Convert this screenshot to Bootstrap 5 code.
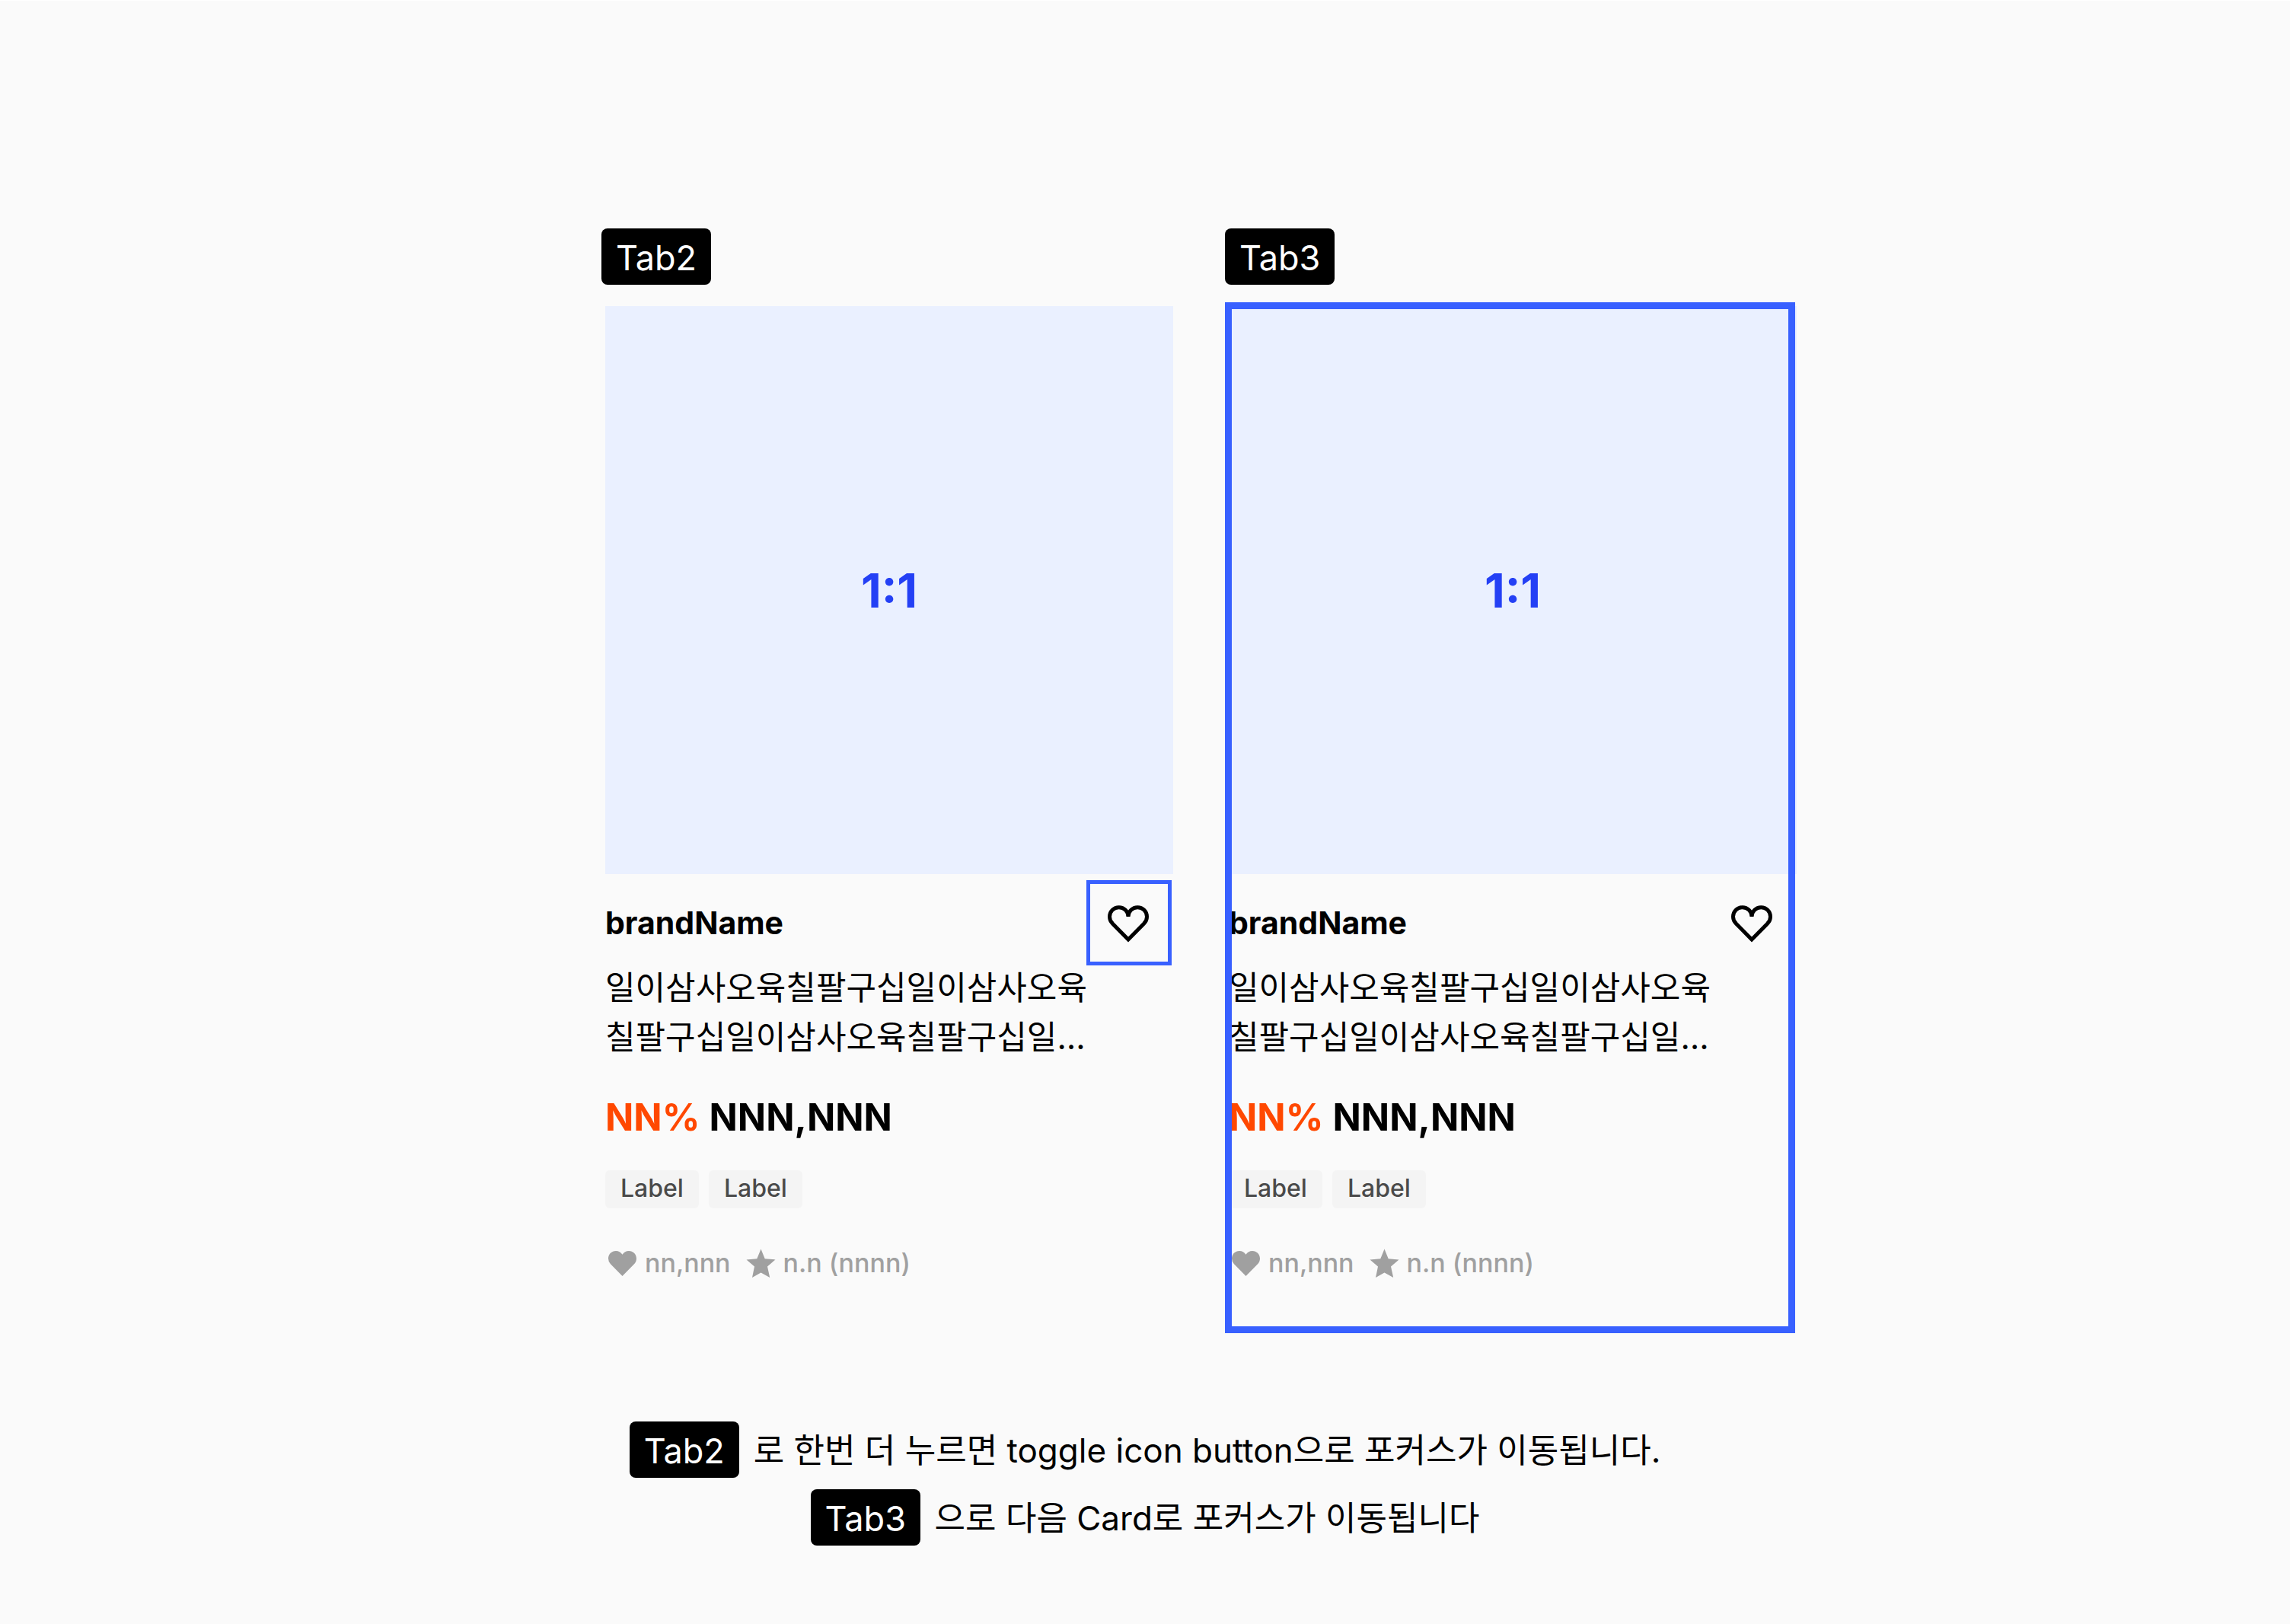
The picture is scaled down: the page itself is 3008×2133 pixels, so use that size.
<!DOCTYPE html>
<html lang="ko">
<head>
<meta charset="utf-8">
<meta name="viewport" content="width=device-width, initial-scale=1">
<title>Card focus order</title>
<link href="https://cdn.jsdelivr.net/npm/bootstrap@5.3.0/dist/css/bootstrap.min.css" rel="stylesheet">
<style>
body{background:#fafafa;color:#000;font-family:Inter,"Noto Sans CJK KR",sans-serif;border-top:1px solid #fff}
.guide{padding-top:299px;padding-bottom:100px}
.board{gap:68px;padding-left:142px}
.tab-tag{background:#000;color:#fff;font-size:45px;line-height:72px;width:144px;padding-left:19px;padding-top:3px;height:74px;border-radius:8px}
.item{width:746px;margin:28px 0 0 5px;padding-bottom:68px}
.thumb{background:#eaf0ff;color:#2440f5;font-size:62px}
.brand-row{height:109px;margin-top:8px}
.brand{font-size:41px;padding-top:4px}
.like{width:112px;height:112px;padding:2px 2px 0 0;border:5px solid transparent;background:none;margin-right:2px}
.like.focused{border-color:#3860ff}
.item-title{font-size:43px;line-height:65px;width:640px;word-break:break-all}
.price{font-size:49px;line-height:60px;margin-top:43px;gap:12px}
.off{color:#ff4800}
.chips{gap:13px;margin-top:39px}
.chip{background:#f4f4f4;color:#4a4a4a;font-size:32px;line-height:47px;padding:0 20px 3px;border-radius:6px}
.stats{color:#a0a0a0;font-size:34px;line-height:48px;margin-top:48px;gap:17px}
.stat{gap:7px}
.focus-frame{inset:-5px 2px 0 -5px;border:9px solid #3860ff;pointer-events:none}
.notes{font-size:44px;line-height:74px;margin-top:116px;gap:15px}
.note{gap:19px}
.note-text{padding-top:2px;line-height:72px}
</style>
<script src="https://cdn.jsdelivr.net/npm/bootstrap@5.3.0/dist/js/bootstrap.bundle.min.js"></script>
</head>
<body>
<svg class="d-none" xmlns="http://www.w3.org/2000/svg">
  <symbol id="heart-line" viewBox="0 0 54 49"><path d="M27 45 6.3 23.9A12.5 12.5 0 0 1 2.5 15a12.25 12.25 0 0 1 24.5 0 12.25 12.25 0 0 1 24.5 0 12.5 12.5 0 0 1-3.8 8.9Z" fill="none" stroke="#000" stroke-width="5" stroke-linejoin="miter"/></symbol>
  <symbol id="heart-fill" viewBox="0 0 45 45"><path d="M22.5 39 7 23.200A10.300 10.300 0 0 1 4 16C4 10.300 8.500 6 14 6c3.500 0 6.500 1.700 8.500 4.700C24.500 7.700 27.500 6 31 6c5.500 0 10 4.300 10 10 0 2.800-1.100 5.300-3 7.200Z" fill="#a0a0a0"/></symbol>
  <symbol id="star-fill" viewBox="0 0 45 45"><path d="m22.500 3.500 5.200 12.700 13.800 1.200-10.500 9.100 3.200 14.500-11.700-6.500L11 41l3-14.500L3.500 17.400l13.800-1.200Z" fill="#a0a0a0"/></symbol>
</svg>
<main class="guide d-flex flex-column align-items-center">
  <section class="board d-flex align-items-start">
    <div>
      <div class="tab-tag">Tab2</div>
      <article class="item">
        <div class="thumb ratio ratio-1x1"><div class="d-flex align-items-center justify-content-center fw-bold">1:1</div></div>
        <div class="brand-row d-flex align-items-start justify-content-between">
          <div class="brand fw-bold h-100 d-flex align-items-center">brandName</div>
          <button type="button" class="like focused d-flex align-items-center justify-content-center" aria-label="Like"><svg width="54" height="49"><use href="#heart-line"/></svg></button>
        </div>
        <div class="item-title">일이삼사오육칠팔구십일이삼사오육칠팔구십일이삼사오육칠팔구십일…</div>
        <div class="price d-flex fw-bold"><span class="off">NN%</span><span>NNN,NNN</span></div>
        <div class="chips d-flex"><span class="chip fw-medium">Label</span><span class="chip fw-medium">Label</span></div>
        <div class="stats d-flex fw-medium">
          <span class="stat d-flex align-items-center"><svg width="45" height="45"><use href="#heart-fill"/></svg>nn,nnn</span>
          <span class="stat d-flex align-items-center"><svg width="45" height="45"><use href="#star-fill"/></svg>n.n (nnnn)</span>
        </div>
      </article>
    </div>
    <div>
      <div class="tab-tag">Tab3</div>
      <article class="item position-relative">
        <div class="thumb ratio ratio-1x1"><div class="d-flex align-items-center justify-content-center fw-bold">1:1</div></div>
        <div class="brand-row d-flex align-items-start justify-content-between">
          <div class="brand fw-bold h-100 d-flex align-items-center">brandName</div>
          <button type="button" class="like d-flex align-items-center justify-content-center" aria-label="Like"><svg width="54" height="49"><use href="#heart-line"/></svg></button>
        </div>
        <div class="item-title">일이삼사오육칠팔구십일이삼사오육칠팔구십일이삼사오육칠팔구십일…</div>
        <div class="price d-flex fw-bold"><span class="off">NN%</span><span>NNN,NNN</span></div>
        <div class="chips d-flex"><span class="chip fw-medium">Label</span><span class="chip fw-medium">Label</span></div>
        <div class="stats d-flex fw-medium">
          <span class="stat d-flex align-items-center"><svg width="45" height="45"><use href="#heart-fill"/></svg>nn,nnn</span>
          <span class="stat d-flex align-items-center"><svg width="45" height="45"><use href="#star-fill"/></svg>n.n (nnnn)</span>
        </div>
        <div class="focus-frame position-absolute"></div>
      </article>
    </div>
  </section>
  <section class="notes d-flex flex-column align-items-center">
    <div class="note d-flex"><span class="tab-tag">Tab2</span><span class="note-text">로 한번 더 누르면 toggle icon button으로 포커스가 이동됩니다.</span></div>
    <div class="note d-flex"><span class="tab-tag">Tab3</span><span class="note-text">으로 다음 Card로 포커스가 이동됩니다</span></div>
  </section>
</main>
</body>
</html>
